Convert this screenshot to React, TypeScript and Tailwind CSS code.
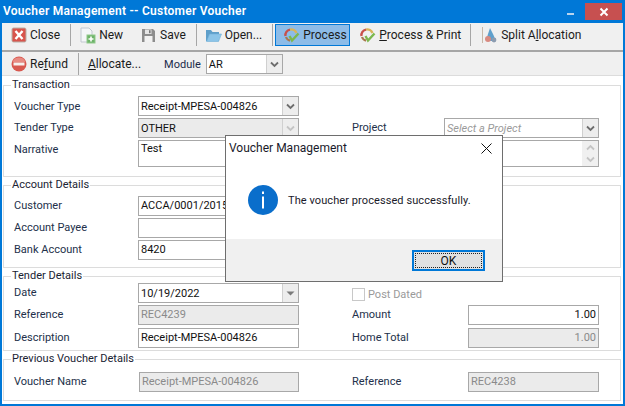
import type { ReactNode } from "react";

const FONT = "font-['Roboto',sans-serif]";

function Chevron({ muted }: { muted?: boolean }) {
  return (
    <svg width="9" height="7" viewBox="0 0 9 7" fill="none">
      <path d="M1 1.5 L4.5 5 L8 1.5" stroke={muted ? "#c4c4c4" : "#6d6d6d"} strokeWidth="1.8" />
    </svg>
  );
}

function CloseIcon() {
  return (
    <svg width="16" height="16" viewBox="0 0 16 16">
      <rect x="1" y="1" width="14" height="14" rx="1.5" fill="#d8544c" stroke="#b8b0a8" />
      <path d="M4.5 4 L11.5 12 M11.5 4 L4.5 12" stroke="#fff" strokeWidth="2.4" />
    </svg>
  );
}

function NewIcon() {
  return (
    <svg width="17" height="17" viewBox="0 0 17 17">
      <path d="M2 1 H10 L13 4 V15 H2 Z" fill="#f4f6f8" stroke="#c2c8d0" />
      <rect x="8" y="8" width="8" height="8" fill="#6fb36a" stroke="#8fc98a" />
      <path d="M12 9.5 V14.5 M9.5 12 H14.5" stroke="#fff" strokeWidth="1.6" />
    </svg>
  );
}

function SaveIcon() {
  return (
    <svg width="15" height="15" viewBox="0 0 15 15">
      <path d="M1 1 H12 L14 3 V14 H1 Z" fill="#8d8d8d" />
      <rect x="4" y="1.5" width="6.5" height="4.5" fill="#e6e6e6" />
      <rect x="8" y="2.2" width="1.6" height="3" fill="#777" />
      <rect x="3.5" y="8" width="8" height="6" fill="#f2f2f2" />
    </svg>
  );
}

function OpenIcon() {
  return (
    <svg width="17" height="15" viewBox="0 0 17 15">
      <path d="M1 2 H6 L7.5 4 H14 V13 H1 Z" fill="#5f9fca" />
      <path d="M1.5 13.5 L4.5 6 H16.5 L13.5 13.5 Z" fill="#8cc4e8" stroke="#6fb0d8" strokeWidth="0.6" />
    </svg>
  );
}

function ProcessIcon() {
  return (
    <svg width="17" height="17" viewBox="0 0 17 17" fill="none" className="shrink-0">
      <path d="M2.5 9 A5.5 5.5 0 0 1 7 2.6" stroke="#c8504a" strokeWidth="2.4" />
      <path d="M7 2.6 A5.5 5.5 0 0 1 13.5 6" stroke="#d8b45a" strokeWidth="2.4" />
      <path d="M3 10 A5.5 5.5 0 0 0 7 13.6" stroke="#a9784f" strokeWidth="2.2" />
      <path d="M6.5 9 L9 13.5 L15.5 6.5" stroke="#7cb84e" strokeWidth="2.4" />
    </svg>
  );
}

function SplitIcon() {
  return (
    <svg width="16" height="18" viewBox="0 0 16 18">
      <rect x="0" y="1" width="1" height="16" fill="#c8b8a8" />
      <path d="M8 2 L11 8 L14 15 H4 L6 8 Z" fill="#5fa0cc" />
      <circle cx="6" cy="13" r="3" fill="#d88a80" />
      <circle cx="12" cy="14" r="2.4" fill="#8c9cb0" />
    </svg>
  );
}

function RefundIcon() {
  return (
    <svg width="16" height="16" viewBox="0 0 16 16">
      <circle cx="8" cy="8" r="7.5" fill="#d8584f" />
      <path d="M1.5 6 A7 7 0 0 1 14.5 6 Z" fill="#e88a82" />
      <rect x="2.5" y="6.5" width="11" height="3" fill="#f6f0ee" />
    </svg>
  );
}

function ToolButton({ icon, children, className }: { icon: ReactNode; children: ReactNode; className?: string }) {
  return (
    <div className={`flex items-center ${className ?? ""}`}>
      <span className="flex h-[18px] w-[17px] items-center justify-center">{icon}</span>
      <span className="ml-[3px] text-[#1b1b1b]">{children}</span>
    </div>
  );
}

function Sep({ className }: { className: string }) {
  return <div className={`h-[22px] w-px bg-[#a6a6a6] ${className}`} />;
}

function Label({ children, className }: { children: ReactNode; className: string }) {
  return <div className={`shrink-0 text-[#22304a] ${className}`}>{children}</div>;
}

function Field({
  value,
  width,
  disabled,
  extra,
}: {
  value?: string;
  width: string;
  disabled?: boolean;
  extra?: string;
}) {
  return (
    <div
      className={`flex h-[20px] shrink-0 items-center border border-[#a8a8a8] px-[2px] ${width} ${extra ?? ""} ${
        disabled ? "bg-[#ebebeb] text-[#8a8a8a]" : "bg-white text-[#111]"
      }`}
    >
      {value}
    </div>
  );
}

function Combo({
  value,
  width,
  disabled,
  placeholder,
  arrow,
}: {
  value: string;
  width: string;
  disabled?: boolean;
  placeholder?: boolean;
  arrow?: ReactNode;
}) {
  return (
    <div className={`flex h-[20px] shrink-0 border border-[#a8a8a8] ${width} ${disabled ? "bg-[#ebebeb]" : "bg-white"}`}>
      <div className={`flex-1 truncate px-[2px] leading-[20px] ${placeholder ? "italic text-[#9a9a9a]" : "text-[#111]"}`}>
        {value}
      </div>
      <div className="flex w-[16px] items-center justify-center border-l border-[#d0d0d0] bg-[#ededed]">
        {arrow ?? <Chevron muted={disabled} />}
      </div>
    </div>
  );
}

function Group({ title, children, className }: { title: string; children: ReactNode; className: string }) {
  return (
    <fieldset className={`mb-px flex flex-col border border-[#dcdcdc] ${className}`}>
      <legend className="ml-[7px] h-[14px] px-px leading-[14px] text-[#1a2333]">{title}</legend>
      {children}
    </fieldset>
  );
}

export default function App() {
  return (
    <div className={`relative h-[406px] w-[625px] overflow-hidden border-x-2 border-b-2 border-[#0078d7] bg-white text-[11px] ${FONT}`}>
      {/* title bar */}
      <div className="-mx-[2px] flex h-[23px] items-start bg-[#0078d7] pl-[3px]">
        <div className="pt-[3px] text-[12px] font-semibold leading-[17px] tracking-[0.25px] text-white">
          Voucher Management -- Customer Voucher
        </div>
        <div className="ml-auto mr-[11px] mt-[13px] h-[2px] w-[7px] bg-[#b8d4ee]" />
        <div className="mr-[3px] mt-[3px] flex h-[17px] w-[37px] items-center justify-center bg-[#c75050]">
          <svg width="10" height="10" viewBox="0 0 10 10">
            <path d="M1.5 1.5 L8.5 8.5 M8.5 1.5 L1.5 8.5" stroke="#fff" strokeWidth="2" />
          </svg>
        </div>
      </div>

      {/* toolbar 1 */}
      <div className="flex h-[29px] items-center border-b-2 border-[#a6a6a6] bg-[#f0f0f0] pb-[3px] text-[12px]">
        <ToolButton icon={<CloseIcon />} className="ml-[8px]">Close</ToolButton>
        <Sep className="ml-[10px]" />
        <ToolButton icon={<NewIcon />} className="ml-[8px]">New</ToolButton>
        <ToolButton icon={<SaveIcon />} className="ml-[17px]">Save</ToolButton>
        <Sep className="ml-[10px]" />
        <ToolButton icon={<OpenIcon />} className="ml-[8px]">Open...</ToolButton>
        <Sep className="ml-[10px]" />
        <div className="ml-[2px] flex h-[22px] w-[75px] items-center border border-[#0078d7] bg-[#8dbce8] pl-[7px]">
          <ProcessIcon />
          <span className="ml-[3px] text-[#1b1b1b]">Process</span>
        </div>
        <ToolButton icon={<ProcessIcon />} className="ml-[9px]">
          <u>P</u>rocess &amp; Print
        </ToolButton>
        <Sep className="ml-[9px]" />
        <ToolButton icon={<SplitIcon />} className="ml-[10px]">
          Split A<u>l</u>location
        </ToolButton>
      </div>

      {/* toolbar 2 */}
      <div className="flex h-[24px] items-center border-b border-[#dcdcdc] bg-[#f0f0f0] pt-px text-[12px]">
        <ToolButton icon={<RefundIcon />} className="ml-[8px]">
          Re<u>f</u>und
        </ToolButton>
        <Sep className="ml-[10px]" />
        <span className="ml-[9px] text-[#1b1b1b]">
          <u>A</u>llocate...
        </span>
        <span className="ml-[23px] pt-[2px] text-[11px] text-[#1a2a4a]">Module</span>
        <div className="ml-[5px] text-[11px]">
          <Combo value="AR" width="w-[77px]" />
        </div>
      </div>

      {/* form */}
      <div className="ml-px mr-[2px] mt-[2px]">
        <Group title="Transaction" className="pb-[9px]">
          <div className="mt-[4px] flex items-center">
            <Label className="w-[134px] pl-[10px] pt-[2px]">Voucher Type</Label>
            <Combo value="Receipt-MPESA-004826" width="w-[161px]" />
          </div>
          <div className="mt-[2px] flex items-center">
            <Label className="w-[134px] pl-[10px] pt-px">Tender Type</Label>
            <Combo value="OTHER" width="w-[161px]" disabled />
            <Label className="ml-[53px] w-[92px] pt-px">Project</Label>
            <Combo value="Select a Project" width="w-[155px]" placeholder />
          </div>
          <div className="mt-[2px] flex items-start">
            <Label className="w-[134px] pl-[10px] pt-[2px]">Narrative</Label>
            <div className="h-[27px] w-[161px] shrink-0 border border-[#a8a8a8] bg-white px-[2px] leading-[16px] text-[#111]">Test</div>
            <div className="ml-[145px] flex h-[27px] w-[155px] shrink-0 justify-end border border-[#a8a8a8] bg-white">
              <div className="flex w-[16px] flex-col items-center justify-between bg-[#f0f0f0] py-[3px]">
                <div className="rotate-180"><Chevron muted /></div>
                <Chevron muted />
              </div>
            </div>
          </div>
        </Group>

        <Group title="Account Details" className="pb-[7px]">
          <div className="mt-[4px] flex items-center">
            <Label className="w-[134px] pl-[10px] pt-px">Customer</Label>
            <Field value="ACCA/0001/2015" width="w-[161px]" extra="pt-px" />
          </div>
          <div className="mt-[2px] flex items-center">
            <Label className="w-[134px] pl-[10px] pt-px">Account Payee</Label>
            <Field width="w-[161px]" />
          </div>
          <div className="mt-[2px] flex items-center">
            <Label className="w-[134px] pl-[10px] pt-px">Bank Account</Label>
            <Field value="8420" width="w-[161px]" extra="pt-px" />
          </div>
        </Group>

        <Group title="Tender Details" className="pb-[2px]">
          <div className="flex items-center">
            <Label className="w-[134px] pl-[10px]">Date</Label>
            <Combo
              value="10/19/2022"
              width="w-[161px]"
              arrow={
                <svg width="9" height="5" viewBox="0 0 9 5">
                  <path d="M0.5 0.5 H8.5 L4.5 4.5 Z" fill="#7a7a7a" />
                </svg>
              }
            />
            <div className="ml-[53px] flex h-[20px] items-end text-[#9a9a9a]">
              <span className="mb-[2px] h-[13px] w-[13px] border border-[#c8c8c8] bg-white" />
              <span className="ml-[3px]">Post Dated</span>
            </div>
          </div>
          <div className="mt-[2px] flex items-center">
            <Label className="w-[134px] pl-[10px]">Reference</Label>
            <Field value="REC4239" width="w-[161px]" disabled />
            <Label className="ml-[53px] w-[116px]">Amount</Label>
            <Field value="1.00" width="w-[131px]" extra="justify-end" />
          </div>
          <div className="mt-[3px] flex items-center">
            <Label className="w-[134px] pl-[10px]">Description</Label>
            <Field value="Receipt-MPESA-004826" width="w-[161px]" />
            <Label className="ml-[53px] w-[116px]">Home Total</Label>
            <Field value="1.00" width="w-[131px]" extra="justify-end" disabled />
          </div>
        </Group>

        <Group title="Previous Voucher Details" className="pb-[8px]">
          <div className="mt-[6px] flex items-center">
            <Label className="w-[135px] pl-[10px]">Voucher Name</Label>
            <Field value="Receipt-MPESA-004826" width="w-[160px]" disabled />
            <Label className="ml-[53px] w-[116px]">Reference</Label>
            <Field value="REC4238" width="w-[131px]" disabled />
          </div>
        </Group>
      </div>

      {/* message box */}
      <div className="absolute left-[223px] top-[135px] flex h-[147px] w-[278px] flex-col border border-[#6e6e6e] bg-white">
        <div className="flex h-[24px] items-center pl-[3px] text-[12px] text-[#1a1a2a]">
          Voucher Management
          <svg className="ml-auto mr-[10px]" width="11" height="11" viewBox="0 0 11 11">
            <path d="M0.5 0.5 L10.5 10.5 M10.5 0.5 L0.5 10.5" stroke="#111" strokeWidth="1" />
          </svg>
        </div>
        <div className="flex flex-1 items-center pl-[22px]">
          <svg width="30" height="30" viewBox="0 0 30 30">
            <circle cx="15" cy="15" r="15" fill="#0a6ecb" />
            <rect x="14" y="6.5" width="2" height="2.5" fill="#fff" />
            <rect x="14" y="11.5" width="2" height="12" fill="#fff" />
          </svg>
          <span className="ml-[10px] pt-[3px] tracking-[0.08px] text-[#1a1a2a]">The voucher processed successfully.</span>
        </div>
        <div className="flex h-[42px] items-start justify-end bg-[#f0f0f0] pr-[17px] pt-[11px] text-[12px]">
          <div className="h-[21px] w-[73px] border-2 border-[#0078d7] bg-[#e1e1e1] p-px">
            <div className="flex h-full items-center justify-center border border-dotted border-[#222] text-[#111]">OK</div>
          </div>
        </div>
      </div>
    </div>
  );
}
